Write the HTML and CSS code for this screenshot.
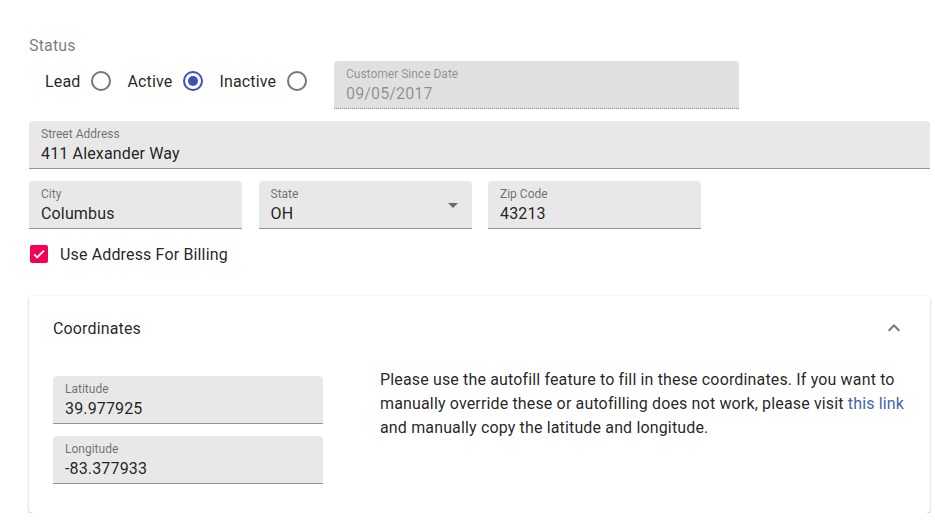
FILE: index.html
```html
<!DOCTYPE HTML>
<html>
  <head>
    <meta charset="UTF-8">
    <link rel="stylesheet" href="styles.css">
  </head>
  <body>
    <div class="page">

      <p class="statuslabel">Status</p>
      <div class="statusrow">
        <div class="radios">
          <label class="radio">Lead <span class="circle"></span></label>
          <label class="radio">Active <span class="circle checked"></span></label>
          <label class="radio">Inactive <span class="circle"></span></label>
        </div>
        <div class="field disabled datefield">
          <span class="flabel">Customer Since Date</span>
          <span class="fvalue">09/05/2017</span>
        </div>
      </div>

      <div class="field">
        <span class="flabel">Street Address</span>
        <span class="fvalue">411 Alexander Way</span>
      </div>

      <div class="row">
        <div class="field small">
          <span class="flabel">City</span>
          <span class="fvalue">Columbus</span>
        </div>
        <div class="field small select">
          <span class="flabel">State</span>
          <span class="fvalue">OH</span>
          <svg class="arrow" viewBox="0 0 24 24" width="24" height="24"><path d="M7 10l5 5 5-5z"/></svg>
        </div>
        <div class="field small">
          <span class="flabel">Zip Code</span>
          <span class="fvalue">43213</span>
        </div>
      </div>

      <label class="check">
        <span class="box"><svg viewBox="0 0 24 24" width="18" height="18"><path d="M5.5 12.5l4 4 9-9" fill="none" stroke="white" stroke-width="2.6"/></svg></span>
        Use Address For Billing
      </label>

      <div class="card">
        <div class="cardhead">
          <span>Coordinates</span>
          <svg class="chev" viewBox="0 0 24 24" width="24" height="24"><path d="M12 8l-6 6 1.41 1.41L12 10.83l4.59 4.58L18 14z"/></svg>
        </div>
        <div class="cardbody">
          <div class="coords">
            <div class="field">
              <span class="flabel">Latitude</span>
              <span class="fvalue">39.977925</span>
            </div>
            <div class="field">
              <span class="flabel">Longitude</span>
              <span class="fvalue">-83.377933</span>
            </div>
          </div>
          <p class="note">Please use the autofill feature to fill in these coordinates. If you want to manually override these or autofilling does not work, please visit <a href="#">this link</a> and manually copy the latitude and longitude.</p>
        </div>
      </div>

    </div>
  </body>
</html>
```

FILE: styles.css
```css
body {
  margin: 0;
  background: white;
  font-family: Roboto, "Liberation Sans", sans-serif;
  color: rgba(0, 0, 0, 0.87);
  letter-spacing: 0.15px;
}
.page {
  margin-left: 29px;
  width: 901px;
  padding-top: 36px;
}
.statuslabel {
  margin: 0 0 6px 0;
  font-size: 16px;
  line-height: 19px;
  color: rgba(0, 0, 0, 0.54);
}
.statusrow {
  display: flex;
  align-items: flex-start;
}
.radios {
  display: flex;
  align-items: center;
  height: 40px;
  padding-left: 16px;
  width: 289px;
}
.radio {
  display: flex;
  align-items: center;
  gap: 11px;
  font-size: 16px;
  margin-right: 16px;
}
.circle {
  width: 16px;
  height: 16px;
  border: 2px solid #757575;
  border-radius: 50%;
  box-sizing: content-box;
  position: relative;
}
.circle.checked {
  border-color: #3f51b5;
}
.circle.checked::after {
  content: "";
  position: absolute;
  left: 3px;
  top: 3px;
  width: 10px;
  height: 10px;
  border-radius: 50%;
  background: #3f51b5;
}
.field {
  position: relative;
  display: flex;
  flex-direction: column;
  background: #e8e8e8;
  border-radius: 4px 4px 0 0;
  border-bottom: 1px solid #949494;
  padding: 6px 12px 5px 12px;
  margin-bottom: 12px;
}
.flabel {
  font-size: 12px;
  line-height: 14px;
  color: rgba(0, 0, 0, 0.54);
  margin-bottom: 3px;
  letter-spacing: 0;
}
.fvalue {
  font-size: 16px;
  line-height: 19px;
}
.disabled {
  background: #e0e0e0;
  border-bottom: 1px dotted #8a8a8a;
}
.disabled .flabel,
.disabled .fvalue {
  color: rgba(0, 0, 0, 0.38);
}
.datefield {
  width: 381px;
}
.row {
  display: flex;
  gap: 16.5px;
}
.small {
  width: 189px;
}
.arrow {
  position: absolute;
  right: 7px;
  top: 12px;
  fill: rgba(0, 0, 0, 0.54);
}
.check {
  display: flex;
  align-items: center;
  gap: 12px;
  font-size: 16px;
  height: 20px;
  margin-top: 3px;
  margin-left: 1px;
}
.box {
  width: 18px;
  height: 18px;
  border-radius: 2px;
  background: #f50057;
  display: flex;
}
.card {
  margin-top: 32px;
  background: white;
  border-radius: 4px;
  box-shadow: 0 1px 3px rgba(0, 0, 0, 0.2), 0 1px 1px rgba(0, 0, 0, 0.14), 0 2px 1px -1px rgba(0, 0, 0, 0.12);
}
.cardhead {
  display: flex;
  align-items: center;
  justify-content: space-between;
  height: 64px;
  padding: 0 24px;
  font-size: 16px;
}
.chev {
  fill: rgba(0, 0, 0, 0.54);
}
.cardbody {
  display: flex;
  padding: 8px 24px 17px 24px;
  gap: 57px;
}
.coords {
  width: 270px;
  padding-top: 8px;
  flex-shrink: 0;
}
.coords .field {
  box-sizing: border-box;
}
.note {
  margin: 0;
  font-size: 16px;
  line-height: 24px;
}
.note a {
  color: #3f63b0;
  text-decoration: none;
}
```
